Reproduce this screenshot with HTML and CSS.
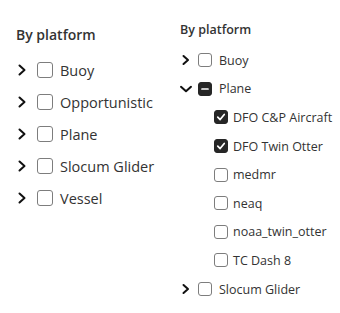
FILE: index.html
```html
<!DOCTYPE html>
<html>
<head>
<meta charset="utf-8">
<link rel="stylesheet" href="styles.css">
</head>
<body>
<div class="page">
  <div class="panel panel-lg">
    <div class="heading">By platform</div>
    <ul class="tree">
      <li class="row"><svg class="chev" viewBox="0 0 12 12"><path d="M3.5 1.5 L8.5 6 L3.5 10.5"/></svg><span class="box"></span><span class="label">Buoy</span></li>
      <li class="row"><svg class="chev" viewBox="0 0 12 12"><path d="M3.5 1.5 L8.5 6 L3.5 10.5"/></svg><span class="box"></span><span class="label">Opportunistic</span></li>
      <li class="row"><svg class="chev" viewBox="0 0 12 12"><path d="M3.5 1.5 L8.5 6 L3.5 10.5"/></svg><span class="box"></span><span class="label">Plane</span></li>
      <li class="row"><svg class="chev" viewBox="0 0 12 12"><path d="M3.5 1.5 L8.5 6 L3.5 10.5"/></svg><span class="box"></span><span class="label">Slocum Glider</span></li>
      <li class="row"><svg class="chev" viewBox="0 0 12 12"><path d="M3.5 1.5 L8.5 6 L3.5 10.5"/></svg><span class="box"></span><span class="label">Vessel</span></li>
    </ul>
  </div>
  <div class="panel panel-sm">
    <div class="heading">By platform</div>
    <ul class="tree">
      <li class="row"><svg class="chev" viewBox="0 0 12 12"><path d="M3.5 2 L8 6 L3.5 10"/></svg><span class="box"></span><span class="label">Buoy</span></li>
      <li class="row"><svg class="chev" viewBox="0 0 12 12"><path d="M1 3.8 L6 8.3 L11 3.8"/></svg><span class="box box-dark"><svg viewBox="0 0 14 14"><path d="M3.5 7 H10.5" class="mark"/></svg></span><span class="label">Plane</span></li>
      <li class="row child"><span class="box box-dark"><svg viewBox="0 0 14 14"><path d="M3.2 7.2 L6 10 L10.8 4" class="mark"/></svg></span><span class="label">DFO C&amp;P Aircraft</span></li>
      <li class="row child"><span class="box box-dark"><svg viewBox="0 0 14 14"><path d="M3.2 7.2 L6 10 L10.8 4" class="mark"/></svg></span><span class="label">DFO Twin Otter</span></li>
      <li class="row child"><span class="box"></span><span class="label">medmr</span></li>
      <li class="row child"><span class="box"></span><span class="label">neaq</span></li>
      <li class="row child"><span class="box"></span><span class="label">noaa_twin_otter</span></li>
      <li class="row child"><span class="box"></span><span class="label">TC Dash 8</span></li>
      <li class="row"><svg class="chev" viewBox="0 0 12 12"><path d="M3.5 2 L8 6 L3.5 10"/></svg><span class="box"></span><span class="label">Slocum Glider</span></li>
    </ul>
  </div>
</div>
</body>
</html>
```

FILE: styles.css
```css
html, body {
  margin: 0;
  padding: 0;
  background: #ffffff;
}

body {
  font-family: "Open Sans", "Noto Sans", sans-serif;
  color: #333333;
}

.page {
  display: flex;
  width: 340px;
  height: 313px;
  overflow: hidden;
}

.panel {
  display: flex;
  flex-direction: column;
}

.tree {
  list-style: none;
  margin: 0;
  padding: 0;
}

.row {
  display: flex;
  align-items: center;
}

.chev {
  width: 12px;
  height: 12px;
  flex: none;
}

.chev path {
  fill: none;
  stroke: #111111;
  stroke-width: 2;
  stroke-linecap: round;
  stroke-linejoin: round;
}

.box {
  flex: none;
  box-sizing: border-box;
  border: 1.5px solid #7d7d7d;
  border-radius: 3px;
  background: #ffffff;
  display: flex;
}

.box svg {
  width: 100%;
  height: 100%;
}

.box-dark {
  background: #262626;
  border-color: #262626;
}

.mark {
  fill: none;
  stroke: #ffffff;
  stroke-width: 2;
  stroke-linecap: round;
  stroke-linejoin: round;
}

.label {
  white-space: nowrap;
}

/* large panel */
.panel-lg {
  width: 180px;
  padding-left: 16px;
  padding-top: 25px;
  box-sizing: border-box;
  flex: none;
}

.panel-lg .heading {
  font-size: 14px;
  font-weight: 600;
  line-height: 20px;
  margin-bottom: 9px;
}

.panel-lg .row {
  height: 32px;
}

.panel-lg .box {
  width: 16px;
  height: 16px;
  margin-left: 9px;
  margin-right: 7px;
}

.panel-lg .label {
  font-size: 14.5px;
}

/* small panel */
.panel-sm {
  padding-top: 21px;
  flex: none;
}

.panel-sm .heading {
  font-size: 12.5px;
  font-weight: 600;
  line-height: 18px;
  margin-bottom: 7px;
}

.panel-sm .row {
  height: 28.6px;
}

.panel-sm .box {
  width: 14px;
  height: 14px;
  margin-left: 6px;
  margin-right: 7px;
}

.panel-sm .child {
  padding-left: 34px;
}

.panel-sm .child .box {
  margin-left: 0;
  margin-right: 5px;
}

.panel-sm .label {
  font-size: 12.5px;
}
```
